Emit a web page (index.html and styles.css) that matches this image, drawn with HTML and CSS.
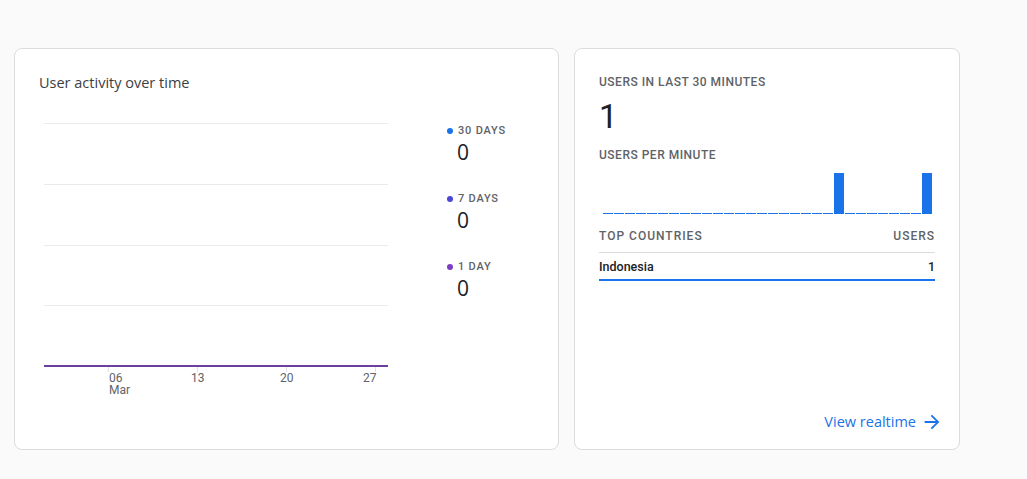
FILE: index.html
```html
<!DOCTYPE html>
<html>
<head>
<meta charset="utf-8">
<link rel="stylesheet" href="styles.css">
</head>
<body>
<div class="page">
  <section class="card card-activity">
    <h2 class="card-title">User activity over time</h2>
    <div class="activity-body">
      <svg class="activity-chart" width="407" height="300" viewBox="0 0 407 300">
        <g stroke="#e8eaed" stroke-width="1">
          <line x1="5" y1="13.5" x2="349" y2="13.5"/>
          <line x1="5" y1="74.5" x2="349" y2="74.5"/>
          <line x1="5" y1="135.5" x2="349" y2="135.5"/>
          <line x1="5" y1="195.5" x2="349" y2="195.5"/>
        </g>
        <g stroke="#e0e0e0" stroke-width="1">
          <line x1="69.5" y1="257" x2="69.5" y2="262"/>
          <line x1="158.5" y1="257" x2="158.5" y2="262"/>
          <line x1="247.5" y1="257" x2="247.5" y2="262"/>
          <line x1="336.5" y1="257" x2="336.5" y2="262"/>
        </g>
        <line x1="5" y1="256" x2="349" y2="256" stroke="#6b3fa0" stroke-width="2"/>
        <g class="axis-label">
          <text x="70" y="272">06</text>
          <text x="70" y="284">Mar</text>
          <text x="152" y="272">13</text>
          <text x="241" y="272">20</text>
          <text x="324" y="272">27</text>
        </g>
      </svg>
      <div class="legend">
        <div class="legend-item">
          <div class="legend-label"><span class="dot dot-30"></span>30 DAYS</div>
          <div class="legend-value">0</div>
        </div>
        <div class="legend-item">
          <div class="legend-label"><span class="dot dot-7"></span>7 DAYS</div>
          <div class="legend-value">0</div>
        </div>
        <div class="legend-item">
          <div class="legend-label"><span class="dot dot-1"></span>1 DAY</div>
          <div class="legend-value">0</div>
        </div>
      </div>
    </div>
  </section>

  <section class="card card-realtime">
    <div class="rt-heading">USERS IN LAST 30 MINUTES</div>
    <div class="rt-big">1</div>
    <div class="rt-heading rt-sub">USERS PER MINUTE</div>
    <div class="bars">
      <span class="bar"></span><span class="bar"></span><span class="bar"></span><span class="bar"></span><span class="bar"></span>
      <span class="bar"></span><span class="bar"></span><span class="bar"></span><span class="bar"></span><span class="bar"></span>
      <span class="bar"></span><span class="bar"></span><span class="bar"></span><span class="bar"></span><span class="bar"></span>
      <span class="bar"></span><span class="bar"></span><span class="bar"></span><span class="bar"></span><span class="bar"></span>
      <span class="bar"></span><span class="bar bar-full"></span><span class="bar"></span><span class="bar"></span><span class="bar"></span>
      <span class="bar"></span><span class="bar"></span><span class="bar"></span><span class="bar"></span><span class="bar bar-full"></span>
    </div>
    <div class="table-head">
      <span>TOP COUNTRIES</span>
      <span>USERS</span>
    </div>
    <div class="table-row">
      <span>Indonesia</span>
      <span>1</span>
    </div>
    <div class="rt-footer">
      <a class="rt-link" href="#">View realtime
        <svg class="arrow" width="22" height="22" viewBox="0 0 24 24"><path fill="#1a73e8" d="M12 4l-1.41 1.41L16.17 11H4v2h12.17l-5.58 5.59L12 20l8-8z"/></svg>
      </a>
    </div>
  </section>
</div>
</body>
</html>
```

FILE: styles.css
```css
* { box-sizing: border-box; }
html, body { margin: 0; padding: 0; }
body {
  background: #fafafa;
  font-family: Roboto, "Liberation Sans", sans-serif;
  width: 1027px;
  height: 479px;
  overflow: hidden;
}
.page {
  display: flex;
  gap: 15px;
  padding: 48px 0 0 14px;
}
.card {
  background: #fff;
  border: 1px solid #dadce0;
  border-radius: 8px;
  height: 402px;
}
.card-activity {
  width: 545px;
  padding: 24px 24px 0 24px;
}
.card-title {
  margin: 0;
  font-family: "Open Sans", sans-serif;
  font-size: 14.5px;
  font-weight: 500;
  line-height: 20px;
  color: #3c4043;
}
.activity-body {
  display: flex;
  margin-top: 17px;
}
.activity-chart { display: block; flex: none; }
.axis-label {
  font-family: Roboto, sans-serif;
  font-size: 12px;
  fill: #5f6368;
}
.legend {
  display: flex;
  flex-direction: column;
  gap: 27px;
  padding-top: 13px;
}
.legend-label {
  display: flex;
  align-items: center;
  font-size: 11px;
  font-weight: 500;
  letter-spacing: 0.8px;
  line-height: 16px;
  color: #5f6368;
}
.dot {
  width: 6px;
  height: 6px;
  border-radius: 50%;
  margin-right: 5px;
  margin-left: 1px;
}
.dot-30 { background: #1a73e8; }
.dot-7 { background: #4a46d6; }
.dot-1 { background: #7a3dc4; }
.legend-value {
  padding-left: 11px;
  font-family: "Open Sans", sans-serif;
  font-size: 21px;
  line-height: 24px;
  margin-top: 1px;
  color: #202124;
}

.card-realtime {
  width: 386px;
  padding: 24px 24px 0 24px;
  display: flex;
  flex-direction: column;
}
.rt-heading {
  font-size: 12px;
  font-weight: 500;
  letter-spacing: 0.5px;
  line-height: 18px;
  color: #5f6368;
}
.rt-big {
  font-size: 33px;
  line-height: 40px;
  color: #202124;
  margin-top: 6px;
}
.rt-sub { margin-top: 9px; }
.bars {
  display: flex;
  align-items: flex-end;
  gap: 1px;
  height: 41px;
  margin-top: 9px;
  padding-left: 4px;
}
.bar {
  width: 10px;
  height: 1px;
  background: #1a73e8;
}
.bar-full { height: 41px; }
.table-head {
  display: flex;
  justify-content: space-between;
  font-size: 12px;
  font-weight: 500;
  letter-spacing: 1px;
  line-height: 16px;
  color: #5f6368;
  margin-top: 14px;
  padding-bottom: 8px;
  border-bottom: 1px solid #dadce0;
}
.table-row {
  display: flex;
  justify-content: space-between;
  font-size: 12.5px;
  font-weight: 500;
  line-height: 16px;
  color: #202124;
  padding: 6px 0 4px;
  border-bottom: 2px solid #1a73e8;
}
.rt-footer {
  margin-top: auto;
  display: flex;
  justify-content: flex-end;
  padding-bottom: 16px;
  margin-right: -8px;
}
.rt-link {
  display: flex;
  align-items: center;
  gap: 5px;
  font-family: "Open Sans", sans-serif;
  font-size: 14.5px;
  font-weight: 500;
  color: #1a73e8;
  text-decoration: none;
  line-height: 20px;
}
.arrow { display: block; }
```
